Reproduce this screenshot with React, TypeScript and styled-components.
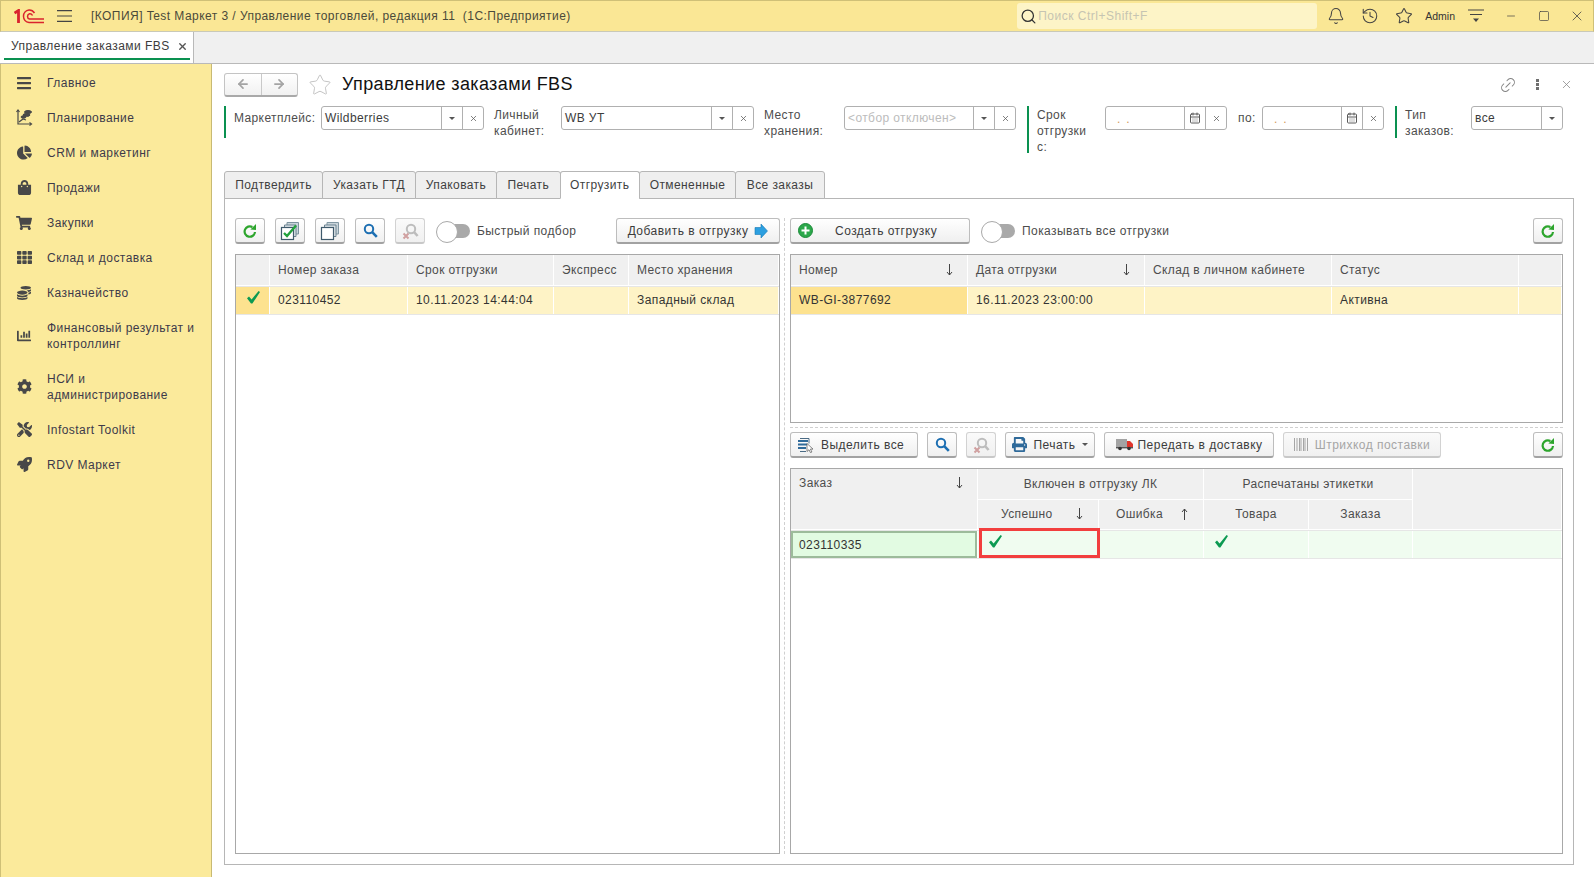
import React from 'react';
import styled, { createGlobalStyle } from 'styled-components';
import {
	ArrowLeft,
	ArrowRight,
	Bell,
	CalendarDays,
	History,
	Link2,
	Minus,
	Search,
	Square,
	Star,
	X,
} from 'lucide-react';
import {
	FaBars,
	FaChartBar,
	FaChartPie,
	FaCog,
	FaCoins,
	FaPrint,
	FaRocket,
	FaShoppingBag,
	FaShoppingCart,
	FaTh,
	FaTools,
} from 'react-icons/fa';

const GlobalStyle = createGlobalStyle`
	html, body {
		margin: 0;
		padding: 0;
		background: #fff;
	}
	body {
		font-family: "Liberation Sans", Arial, sans-serif;
		font-size: 13px;
		color: #3c3c3c;
	}
	* {
		box-sizing: border-box;
	}
`;

const Screen = styled.div`
	width: 1594px;
	height: 877px;
	display: flex;
	flex-direction: column;
	overflow: hidden;
`;

/* ---- title bar ---- */
const TitleBar = styled.header`
	height: 32px;
	flex: none;
	display: flex;
	align-items: center;
	background: #fae795;
	border: 1px solid #cfc077;
	border-bottom: 1px solid #c9c9b8;
	color: #4a4a3a;
`;
const Logo = styled.svg`
	width: 30px;
	height: 15px;
	margin-left: 13px;
`;
const Burger = styled.span`
	display: flex;
	margin-left: 13px;
`;
const WindowTitle = styled.span`
	margin-left: 19px;
	font-size: 12px;
	letter-spacing: 0.45px;
	white-space: pre;
`;
const SearchBox = styled.div`
	margin-left: auto;
	margin-right: 2px;
	width: 300px;
	height: 26px;
	display: flex;
	align-items: center;
	gap: 1px;
	padding-left: 3px;
	border-radius: 3px;
	background: #fdf4c7;
	color: #c6c4b2;
	font-size: 12px;
	letter-spacing: 0.5px;
`;
const TitleIcon = styled.span<{ $gap: number; $end?: number }>`
	display: flex;
	margin-left: ${(p) => p.$gap}px;
	margin-right: ${(p) => p.$end ?? 0}px;
	color: #444;
`;
const AdminName = styled.span`
	margin-left: 12px;
	font-size: 10.5px;
	color: #333;
`;

/* ---- open windows bar ---- */
const WindowTabs = styled.div`
	height: 32px;
	flex: none;
	display: flex;
	background: #f0f0f0;
	border-bottom: 1px solid #b9b9b9;
`;
const WindowTab = styled.div`
	width: 194px;
	display: flex;
	align-items: center;
	justify-content: space-between;
	position: relative;
	padding: 0 5px 3px 11px;
	background: #fff;
	border-right: 1px solid #b9b9b9;
	font-size: 12px;
	letter-spacing: 0.46px;
	color: #3c3c3c;

	&::after {
		content: '';
		position: absolute;
		left: 4px;
		right: 3px;
		bottom: 3px;
		height: 2px;
		background: #0a9150;
	}
`;

/* ---- body ---- */
const Body = styled.div`
	flex: 1;
	display: flex;
	min-height: 0;
`;
const Sidebar = styled.nav`
	width: 212px;
	flex: none;
	padding-top: 1px;
	background: #fbea9b;
	border-left: 1px solid #cfc077;
	border-right: 1px solid #c8ba74;
`;
const NavItem = styled.div`
	display: flex;
	align-items: center;
	padding: 9.5px 8px 9.5px 0;
	line-height: 16px;
	font-size: 12px;
	letter-spacing: 0.46px;
	color: #3d3a4a;
`;
const NavIcon = styled.span`
	width: 46px;
	height: 16px;
	flex: none;
	display: flex;
	align-items: center;
	justify-content: center;
	color: #484848;
`;

const Content = styled.main`
	flex: 1;
	min-width: 0;
	display: flex;
	flex-direction: column;
	padding: 9px 20px 12px 12px;
`;
const HeaderRow = styled.div`
	height: 23px;
	flex: none;
	display: flex;
	align-items: center;
`;
const NavButtons = styled.div`
	width: 74px;
	height: 24px;
	display: flex;
	border: 1px solid #c4c4c4;
	border-bottom: 2px solid #a9a9a9;
	border-radius: 3px;
	background: linear-gradient(#fff, #f1f1f1);
	color: #a4a4a4;

	& > span {
		flex: 1;
		display: flex;
		align-items: center;
		justify-content: center;
	}
	& > span + span {
		border-left: 1px solid #c9c9c9;
	}
`;
const PageTitle = styled.h1`
	margin: 0 0 0 10px;
	font-size: 18px;
	font-weight: 400;
	letter-spacing: 0.38px;
	color: #111;
`;
const HeaderActions = styled.div`
	margin-left: auto;
	margin-right: 1px;
	display: flex;
	align-items: center;
	gap: 14px;
	color: #858585;
`;
const Dots = styled.span`
	width: 3px;
	height: 11px;
	margin: 0 7px 0 5px;
	background: repeating-linear-gradient(#6e6e6e 0 3px, transparent 3px 4px);
`;

/* ---- filters ---- */
const Filters = styled.div`
	height: 47px;
	flex: none;
	margin-top: 10px;
	display: flex;
	align-items: flex-start;
`;
const Group = styled.div<{ $bar?: boolean; $height?: number; $gap: number }>`
	display: flex;
	align-items: flex-start;
	height: ${(p) => p.$height ?? 32}px;
	margin-left: ${(p) => p.$gap}px;
	padding-left: ${(p) => (p.$bar ? 8 : 0)}px;
	border-left: ${(p) => (p.$bar ? '2px solid #0a9150' : 'none')};
`;
const FilterLabel = styled.label<{ $width: number; $top?: number }>`
	width: ${(p) => p.$width}px;
	flex: none;
	padding-top: ${(p) => (p.$top ?? 0) + 1}px;
	line-height: 16px;
	font-size: 12px;
	letter-spacing: 0.38px;
	color: #4d4d4d;
`;
const Field = styled.div<{ $width: number }>`
	width: ${(p) => p.$width}px;
	height: 24px;
	flex: none;
	display: flex;
	align-items: stretch;
	background: #fff;
	border: 1px solid #b0b0b0;
	border-radius: 3px;
`;
const FieldValue = styled.span<{ $muted?: boolean }>`
	flex: 1;
	min-width: 0;
	padding-left: 3px;
	line-height: 22px;
	font-size: 12px;
	letter-spacing: 0.4px;
	white-space: nowrap;
	color: ${(p) => (p.$muted ? '#bcbcbc' : '#3c3c3c')};
`;
const DateMask = styled.span`
	flex: 1;
	padding-left: 11px;
	line-height: 24px;
	font-size: 12px;
	letter-spacing: 6px;
	color: #d49a5a;
`;
const FieldButton = styled.span`
	width: 21px;
	flex: none;
	display: flex;
	align-items: center;
	justify-content: center;
	border-left: 1px solid #b0b0b0;
	color: #5a5a5a;
`;
const Caret = styled.i`
	width: 0;
	height: 0;
	border-left: 3px solid transparent;
	border-right: 3px solid transparent;
	border-top: 3px solid #555;
`;

/* ---- form tabs ---- */
const TabStrip = styled.div`
	height: 28px;
	flex: none;
	margin-top: 18px;
	display: flex;
	position: relative;
	z-index: 1;
	margin-bottom: -1px;
`;
const FormTab = styled.div<{ $width: number; $active?: boolean }>`
	width: ${(p) => p.$width}px;
	display: flex;
	align-items: center;
	justify-content: center;
	padding-bottom: 1px;
	background: ${(p) => (p.$active ? '#fff' : '#efefef')};
	border: 1px solid #b6b6b6;
	border-bottom-color: ${(p) => (p.$active ? '#fff' : '#b6b6b6')};
	border-radius: 3px 3px 0 0;
	margin-right: -1px;
	font-size: 12px;
	letter-spacing: 0.4px;
	color: #3f3f3f;
`;
const TabPage = styled.section`
	flex: 1;
	min-height: 0;
	display: flex;
	padding: 19px 10px 10px 10px;
	border: 1px solid #b6b6b6;
`;
const LeftPane = styled.div`
	width: 545px;
	flex: none;
	display: flex;
	flex-direction: column;
	gap: 10px;
`;
const VerticalSplit = styled.div`
	width: 1px;
	flex: none;
	margin: 0 5px 0 4px;
	border-left: 1px dashed #d0d0d0;
`;
const RightPane = styled.div`
	flex: 1;
	min-width: 0;
	display: flex;
	flex-direction: column;
`;
const HorizontalSplit = styled.div`
	height: 5px;
	flex: none;
	margin-top: 4px;
	border-top: 1px dashed #d0d0d0;
`;

/* ---- toolbars ---- */
const Toolbar = styled.div<{ $after?: number; $gap?: number }>`
	height: 26px;
	flex: none;
	display: flex;
	align-items: stretch;
	gap: ${(p) => p.$gap ?? 10}px;
	margin-bottom: ${(p) => p.$after ?? 0}px;
`;
const Button = styled.button<{ $width: number; $disabled?: boolean; $gap?: number; $pad?: number }>`
	width: ${(p) => p.$width}px;
	flex: none;
	padding: 0 0 0 ${(p) => p.$pad ?? 0}px;
	display: flex;
	align-items: center;
	justify-content: ${(p) => (p.$pad ? 'flex-start' : 'center')};
	gap: ${(p) => p.$gap ?? 6}px;
	font-family: inherit;
	font-size: 12px;
	letter-spacing: 0.47px;
	color: ${(p) => (p.$disabled ? '#a5a5a5' : '#3c3c3c')};
	background: ${(p) => (p.$disabled ? 'linear-gradient(#fafafa, #f0f0f0)' : 'linear-gradient(#fff, #efefef)')};
	border: 1px solid ${(p) => (p.$disabled ? '#d2d2d2' : '#bdbdbd')};
	border-bottom: 2px solid ${(p) => (p.$disabled ? '#c8c8c8' : '#a2a2a2')};
	border-radius: 3px;
`;
const ToggleWrap = styled.div<{ $gap: number }>`
	display: flex;
	align-items: center;
	gap: 7px;
	margin-left: ${(p) => p.$gap}px;
	font-size: 12px;
	letter-spacing: 0.42px;
	color: #4d4d4d;
`;
const Toggle = styled.span`
	width: 34px;
	height: 20px;
	position: relative;
	display: block;

	&::before {
		content: '';
		position: absolute;
		left: 6px;
		right: 0;
		top: 3px;
		bottom: 3px;
		border-radius: 7px;
		background: #a9a9a9;
	}
	&::after {
		content: '';
		position: absolute;
		left: 0;
		top: 0;
		width: 20px;
		height: 20px;
		border-radius: 50%;
		background: #fff;
		border: 1px solid #a9a9a9;
	}
`;
const PushRight = styled.div`
	margin-left: auto;
`;

/* ---- tables ---- */
const Table = styled.div<{ $height?: number }>`
	${(p) => (p.$height ? `height: ${p.$height}px; flex: none;` : 'flex: 1; min-height: 0;')}
	border: 1px solid #a8a8a8;
	background: #fff;
`;
const GridRow = styled.div<{ $cols: string }>`
	display: grid;
	grid-template-columns: ${(p) => p.$cols};
`;
const HeaderCell = styled.div<{ $col?: string; $row?: string; $center?: boolean; $top?: boolean; $pad?: number; $gap?: number }>`
	grid-column: ${(p) => p.$col ?? 'auto'};
	grid-row: ${(p) => p.$row ?? 'auto'};
	display: flex;
	align-items: ${(p) => (p.$top ? 'flex-start' : 'center')};
	justify-content: ${(p) => (p.$center ? 'center' : 'flex-start')};
	gap: ${(p) => p.$gap ?? 22}px;
	min-height: 30.5px;
	padding: ${(p) => (p.$top ? '7px 8px 0' : `0 8px 0 ${p.$pad ?? 8}px`)};
	background: #f0f0f0;
	border-right: 1px solid #fff;
	border-bottom: 1px solid #fff;
	font-size: 12px;
	letter-spacing: 0.38px;
	color: #4d4d4d;
	white-space: nowrap;
`;
const SortMark = styled.svg<{ $push?: boolean }>`
	width: 7px;
	height: 12px;
	flex: none;
	margin-left: ${(p) => (p.$push ? 'auto' : '0')};
	margin-right: ${(p) => (p.$push ? '6px' : '0')};
	margin-top: ${(p) => (p.$push ? '1px' : '0')};
`;
const DataRow = styled(GridRow)<{ $tone: 'yellow' | 'green' }>`
	background: ${(p) => (p.$tone === 'yellow' ? '#fef3c6' : '#f0fcf0')};
	border-top: 1px solid #e6e6e6;
	border-bottom: 1px solid #e6e6e6;
`;
const DataCell = styled.div<{ $current?: 'yellow' | 'green'; $mark?: boolean }>`
	position: relative;
	height: 27px;
	display: flex;
	align-items: ${(p) => (p.$mark ? 'flex-start' : 'center')};
	justify-content: flex-start;
	padding: ${(p) => (p.$mark ? '3px 8px 0 10px' : '0 8px')};
	border-right: 1px solid #fff;
	font-size: 12px;
	letter-spacing: 0.42px;
	color: #333;
	white-space: nowrap;
	background: ${(p) =>
		p.$current === 'yellow' ? '#fde28f' : p.$current === 'green' ? '#e2fbe2' : 'transparent'};
	box-shadow: ${(p) => (p.$current === 'green' ? 'inset 0 0 0 2px #9dbb9b' : 'none')};
`;
const RedMark = styled.div`
	position: absolute;
	left: 1px;
	right: -2px;
	top: -3px;
	bottom: 0;
	border: 3px solid #f23e3e;
`;

const Check: React.FC = () => (
	<svg width="15" height="15" viewBox="0 0 15 15">
		<path d="M1 8.2 3 6.6 5.6 9.4 12.6 1 14 2 6.4 13.6H5Z" fill="#0c9a52" />
	</svg>
);

const SortDown: React.FC<{ push?: boolean }> = ({ push }) => (
	<SortMark $push={push} viewBox="0 0 7 12" fill="none" stroke="#444">
		<path d="M3.5 0v11M1 8l2.5 3L6 8" />
	</SortMark>
);

const SortUp: React.FC = () => (
	<SortMark viewBox="0 0 7 12" fill="none" stroke="#444">
		<path d="M3.5 12V1M1 4l2.5-3L6 4" />
	</SortMark>
);

const Refresh: React.FC = () => (
	<svg width="16" height="16" viewBox="0 0 16 16" fill="none">
		<path d="M13 9a5.2 5.2 0 1 1-2.6-5" stroke="#2da52d" strokeWidth="2.2" />
		<path d="M8.4 6.4 14 7V1Z" fill="#2da52d" />
	</svg>
);

const BlueSearch: React.FC = () => (
	<svg width="15" height="15" viewBox="0 0 15 15" fill="none" stroke="#1d6fb2">
		<circle cx="6" cy="6" r="4.2" strokeWidth="2" />
		<path d="m9.2 9.2 4.6 4.6" strokeWidth="2.6" />
	</svg>
);

const OffSearch: React.FC = () => (
	<svg width="18" height="18" viewBox="0 0 18 18" fill="none">
		<circle cx="10" cy="7" r="4.2" stroke="#bdbdbd" strokeWidth="2" />
		<path d="m13 10 3.6 4" stroke="#bdbdbd" strokeWidth="2.6" />
		<path d="m2.5 11.5 5 5m0-5-5 5" stroke="#d0a0a0" strokeWidth="2" />
	</svg>
);

const CheckedCopies: React.FC = () => (
	<svg width="20" height="20" viewBox="0 0 20 20" fill="none">
		<path d="M7 4V1.5h11.5V13H16" fill="#c9d4da" stroke="#7c929e" />
		<path d="M4.5 6.5V4H16v11.5h-2.5" fill="#dde4e8" stroke="#6a8290" />
		<rect x="1.5" y="6.5" width="12" height="12" fill="#fff" stroke="#3f5a6c" strokeWidth="1.2" />
		<path d="m4 12 3 3L16 4.5" stroke="#22a13c" strokeWidth="2.4" />
	</svg>
);

const Copies: React.FC = () => (
	<svg width="20" height="20" viewBox="0 0 20 20" fill="none">
		<path d="M7 4V1.5h11.5V13H16" fill="#c9d4da" stroke="#8298a4" />
		<path d="M4.5 6.5V4H16v11.5h-2.5" fill="#dde4e8" stroke="#6a8290" />
		<rect x="1.5" y="6.5" width="12" height="12" fill="#fff" stroke="#3f5a6c" strokeWidth="1.2" />
	</svg>
);

const BlueArrow: React.FC = () => (
	<svg width="14" height="16" viewBox="0 0 14 16">
		<path d="M1 4.5h6V1l6.5 7L7 15v-3.5H1Z" fill="#2c9fe0" stroke="#1678b4" strokeWidth="0.6" />
	</svg>
);

const PlusCircle: React.FC = () => (
	<svg width="15" height="15" viewBox="0 0 15 15">
		<circle cx="7.5" cy="7.5" r="7" fill="#2ca84b" stroke="#1a8a38" />
		<path d="M7.5 3.5v8M3.5 7.5h8" stroke="#fff" strokeWidth="2" />
	</svg>
);

const SelectAll: React.FC = () => (
	<svg width="17" height="16" viewBox="0 0 17 16" fill="none">
		<path d="M3 1.5h9v5M3 14.5h6" stroke="#4b6b85" />
		<path d="M1 4h10M1 7.5h9M1 11h8" stroke="#2f6a9a" strokeWidth="2" />
		<path d="M10 6.5v8l2-1.8 1.5 3 1.4-.7-1.5-2.9H16Z" fill="#fff" stroke="#555" strokeWidth="0.7" />
	</svg>
);

const Truck: React.FC = () => (
	<svg width="17" height="13" viewBox="0 0 17 13">
		<rect x="0" y="1" width="11" height="8" fill="#a3a3a3" />
		<path d="M11 3h3l3 3v3h-6Z" fill="#e0352b" />
		<rect x="0" y="9" width="17" height="1.4" fill="#555" />
		<circle cx="4" cy="10.5" r="1.8" fill="#333" />
		<circle cx="13" cy="10.5" r="1.8" fill="#333" />
	</svg>
);

const Barcode: React.FC = () => (
	<svg width="15" height="13" viewBox="0 0 15 13" fill="none" stroke="#a5a5a5">
		<path d="M.5 0v13M3 0v13M5.5 0v13M7 0v13M9.5 0v13M11 0v13M13.5 0v13" />
	</svg>
);

const PlanIcon: React.FC = () => (
	<svg width="18" height="18" viewBox="0 0 18 18" fill="none" stroke="#484848">
		<path d="M3 1v14h13" strokeWidth="1.2" />
		<path d="m1.5 3 1.5-2 1.5 2M14.5 13.5l2 1.5-2 1.5" strokeWidth="1.2" />
		<path d="m4 13 4-3 3 1" strokeWidth="1.2" />
		<ellipse cx="13" cy="3" rx="3.5" ry="1.5" fill="#484848" />
		<ellipse cx="11.5" cy="6" rx="3.5" ry="1.4" fill="#484848" />
		<ellipse cx="8.5" cy="8" rx="2.5" ry="1.2" fill="#484848" />
	</svg>
);

const navItems: { icon: React.ReactNode; label: React.ReactNode }[] = [
	{ icon: <FaBars size={16} />, label: 'Главное' },
	{ icon: <PlanIcon />, label: 'Планирование' },
	{ icon: <FaChartPie size={15} />, label: 'CRM и маркетинг' },
	{ icon: <FaShoppingBag size={15} />, label: 'Продажи' },
	{ icon: <FaShoppingCart size={16} />, label: 'Закупки' },
	{ icon: <FaTh size={15} />, label: 'Склад и доставка' },
	{ icon: <FaCoins size={14} />, label: 'Казначейство' },
	{ icon: <FaChartBar size={14} />, label: <>Финансовый результат и<br />контроллинг</> },
	{ icon: <FaCog size={15} />, label: <>НСИ и<br />администрирование</> },
	{ icon: <FaTools size={15} />, label: 'Infostart Toolkit' },
	{ icon: <FaRocket size={15} />, label: 'RDV Маркет' },
];

const formTabs = [
	{ label: 'Подтвердить', width: 99 },
	{ label: 'Указать ГТД', width: 94 },
	{ label: 'Упаковать', width: 82 },
	{ label: 'Печать', width: 64.5 },
	{ label: 'Отгрузить', width: 80.5, active: true },
	{ label: 'Отмененные', width: 97 },
	{ label: 'Все заказы', width: 90 },
];

const Clear: React.FC = () => (
	<FieldButton>
		<X size={9} strokeWidth={2} />
	</FieldButton>
);
const Drop: React.FC = () => (
	<FieldButton>
		<Caret />
	</FieldButton>
);
const Calendar: React.FC = () => (
	<FieldButton>
		<CalendarDays size={12} strokeWidth={2} />
	</FieldButton>
);

const ordersCols = '34px 138px 146px 75px 1fr';
const shipmentsCols = '177px 177px 187px 187px 1fr';
const parcelCols = '187px 121px 105px 105px 104px 1fr';

export default function App() {
	return (
		<Screen>
			<GlobalStyle />
			<TitleBar>
				<Logo viewBox="0 0 30 15" fill="none" stroke="#d9232e" strokeWidth="1.5">
					<path d="M.5 4 4.5 1.5V14" strokeWidth="2.8" />
					<path d="M20.5 4A6.2 6.2 0 0 0 15 1 6.3 6.3 0 0 0 15 13.5H30" />
					<path d="M18.5 6.5A3 3 0 0 0 15.5 4.8 2.7 2.7 0 0 0 15.5 10H30" />
				</Logo>
				<Burger>
					<svg width="15" height="12" viewBox="0 0 15 12" stroke="#444" strokeWidth="1.2">
						<path d="M0 .6h15M0 6h15M0 11.4h15" />
					</svg>
				</Burger>
				<WindowTitle>{'[КОПИЯ] Test Маркет 3 / Управление торговлей, редакция 11  (1С:Предприятие)'}</WindowTitle>
				<SearchBox>
					<Search size={17} strokeWidth={1.8} color="#333" />
					Поиск Ctrl+Shift+F
				</SearchBox>
				<TitleIcon $gap={8}><Bell size={18} strokeWidth={1.4} /></TitleIcon>
				<TitleIcon $gap={16}><History size={18} strokeWidth={1.4} /></TitleIcon>
				<TitleIcon $gap={16}><Star size={18} strokeWidth={1.4} /></TitleIcon>
				<AdminName>Admin</AdminName>
				<TitleIcon $gap={13}>
					<svg width="16" height="14" viewBox="0 0 16 14" stroke="#444" strokeWidth="1.1">
						<path d="M0 1h16M2 5.5h12" />
						<path d="M5 9.5h6L8 13Z" fill="#444" stroke="none" />
					</svg>
				</TitleIcon>
				<TitleIcon $gap={21}><Minus size={12} strokeWidth={1.4} /></TitleIcon>
				<TitleIcon $gap={21}><Square size={12} strokeWidth={1.4} /></TitleIcon>
				<TitleIcon $gap={19} $end={8}><X size={16} strokeWidth={1.2} /></TitleIcon>
			</TitleBar>

			<WindowTabs>
				<WindowTab>
					Управление заказами FBS
					<X size={11} strokeWidth={3} color="#555" />
				</WindowTab>
			</WindowTabs>

			<Body>
				<Sidebar>
					{navItems.map((item, i) => (
						<NavItem key={i}>
							<NavIcon>{item.icon}</NavIcon>
							<span>{item.label}</span>
						</NavItem>
					))}
				</Sidebar>

				<Content>
					<HeaderRow>
						<NavButtons>
							<span><ArrowLeft size={14} strokeWidth={3} /></span>
							<span><ArrowRight size={14} strokeWidth={3} /></span>
						</NavButtons>
						<Star size={24} strokeWidth={0.8} color="#b5b5b5" style={{ marginLeft: 10 }} />
						<PageTitle>Управление заказами FBS</PageTitle>
						<HeaderActions>
							<Link2 size={18} strokeWidth={1.3} style={{ transform: 'rotate(-45deg)' }} />
							<Dots />
							<X size={13} strokeWidth={1.4} />
						</HeaderActions>
					</HeaderRow>

					<Filters>
						<Group $bar $gap={0}>
							<FilterLabel $width={87} $top={3}>Маркетплейс:</FilterLabel>
							<Field $width={163}>
								<FieldValue>Wildberries</FieldValue>
								<Drop />
								<Clear />
							</Field>
						</Group>
						<Group $gap={10}>
							<FilterLabel $width={67}>Личный кабинет:</FilterLabel>
							<Field $width={193}>
								<FieldValue>WB УТ</FieldValue>
								<Drop />
								<Clear />
							</Field>
						</Group>
						<Group $gap={10}>
							<FilterLabel $width={80}>Место хранения:</FilterLabel>
							<Field $width={172}>
								<FieldValue $muted>{'<отбор отключен>'}</FieldValue>
								<Drop />
								<Clear />
							</Field>
						</Group>
						<Group $bar $gap={11} $height={47}>
							<FilterLabel $width={68}>Срок<br />отгрузки<br />с:</FilterLabel>
							<Field $width={122}>
								<DateMask>..</DateMask>
								<Calendar />
								<Clear />
							</Field>
						</Group>
						<Group $gap={11}>
							<FilterLabel $width={24} $top={3}>по:</FilterLabel>
							<Field $width={122}>
								<DateMask>..</DateMask>
								<Calendar />
								<Clear />
							</Field>
						</Group>
						<Group $bar $gap={11}>
							<FilterLabel $width={66}>Тип заказов:</FilterLabel>
							<Field $width={92}>
								<FieldValue>все</FieldValue>
								<Drop />
							</Field>
						</Group>
					</Filters>

					<TabStrip>
						{formTabs.map((tab) => (
							<FormTab key={tab.label} $width={tab.width} $active={tab.active}>
								{tab.label}
							</FormTab>
						))}
					</TabStrip>

					<TabPage>
						<LeftPane>
							<Toolbar>
								<Button $width={30}><Refresh /></Button>
								<Button $width={30}><CheckedCopies /></Button>
								<Button $width={30}><Copies /></Button>
								<Button $width={30}><BlueSearch /></Button>
								<Button $width={30} $disabled><OffSearch /></Button>
								<ToggleWrap $gap={1}>
									<Toggle />
									Быстрый подбор
								</ToggleWrap>
								<PushRight />
								<Button $width={164}>
									Добавить в отгрузку
									<BlueArrow />
								</Button>
							</Toolbar>
							<Table>
								<GridRow $cols={ordersCols}>
									<HeaderCell />
									<HeaderCell>Номер заказа</HeaderCell>
									<HeaderCell>Срок отгрузки</HeaderCell>
									<HeaderCell>Экспресс</HeaderCell>
									<HeaderCell>Место хранения</HeaderCell>
								</GridRow>
								<DataRow $cols={ordersCols} $tone="yellow">
									<DataCell $current="yellow" $mark><Check /></DataCell>
									<DataCell>023110452</DataCell>
									<DataCell>10.11.2023 14:44:04</DataCell>
									<DataCell />
									<DataCell>Западный склад</DataCell>
								</DataRow>
							</Table>
						</LeftPane>

						<VerticalSplit />

						<RightPane>
							<Toolbar $after={10}>
								<Button $width={180} $pad={7} $gap={22}>
									<PlusCircle />
									Создать отгрузку
								</Button>
								<ToggleWrap $gap={1}>
									<Toggle />
									Показывать все отгрузки
								</ToggleWrap>
								<PushRight />
								<Button $width={30}><Refresh /></Button>
							</Toolbar>
							<Table $height={169}>
								<GridRow $cols={shipmentsCols}>
									<HeaderCell>
										Номер
										<SortDown push />
									</HeaderCell>
									<HeaderCell>
										Дата отгрузки
										<SortDown push />
									</HeaderCell>
									<HeaderCell>Склад в личном кабинете</HeaderCell>
									<HeaderCell>Статус</HeaderCell>
									<HeaderCell />
								</GridRow>
								<DataRow $cols={shipmentsCols} $tone="yellow">
									<DataCell $current="yellow">WB-GI-3877692</DataCell>
									<DataCell>16.11.2023 23:00:00</DataCell>
									<DataCell />
									<DataCell>Активна</DataCell>
									<DataCell />
								</DataRow>
							</Table>

							<HorizontalSplit />

							<Toolbar $after={10} $gap={9}>
								<Button $width={128} $pad={6} $gap={7}><SelectAll />Выделить все</Button>
								<Button $width={30}><BlueSearch /></Button>
								<Button $width={30} $disabled><OffSearch /></Button>
								<Button $width={90}><FaPrint size={15} color="#2f6a9a" />Печать<Caret /></Button>
								<Button $width={170} $gap={5}><Truck />Передать в доставку</Button>
								<Button $width={158} $disabled><Barcode />Штрихкод поставки</Button>
								<PushRight />
								<Button $width={30}><Refresh /></Button>
							</Toolbar>
							<Table>
								<GridRow $cols={parcelCols}>
									<HeaderCell $col="1" $row="1 / span 2" $top>
										Заказ
										<SortDown push />
									</HeaderCell>
									<HeaderCell $col="2 / span 2" $row="1" $center>Включен в отгрузку ЛК</HeaderCell>
									<HeaderCell $col="4 / span 2" $row="1" $center>Распечатаны этикетки</HeaderCell>
									<HeaderCell $col="6" $row="1 / span 2" />
									<HeaderCell $col="2" $row="2" $pad={23} $gap={23}>
										Успешно
										<SortDown />
									</HeaderCell>
									<HeaderCell $col="3" $row="2" $pad={17} $gap={18}>
										Ошибка
										<SortUp />
									</HeaderCell>
									<HeaderCell $col="4" $row="2" $center>Товара</HeaderCell>
									<HeaderCell $col="5" $row="2" $center>Заказа</HeaderCell>
								</GridRow>
								<DataRow $cols={parcelCols} $tone="green">
									<DataCell $current="green">023110335</DataCell>
									<DataCell $mark>
										<Check />
										<RedMark />
									</DataCell>
									<DataCell />
									<DataCell $mark><Check /></DataCell>
									<DataCell />
									<DataCell />
								</DataRow>
							</Table>
						</RightPane>
					</TabPage>
				</Content>
			</Body>
		</Screen>
	);
}
